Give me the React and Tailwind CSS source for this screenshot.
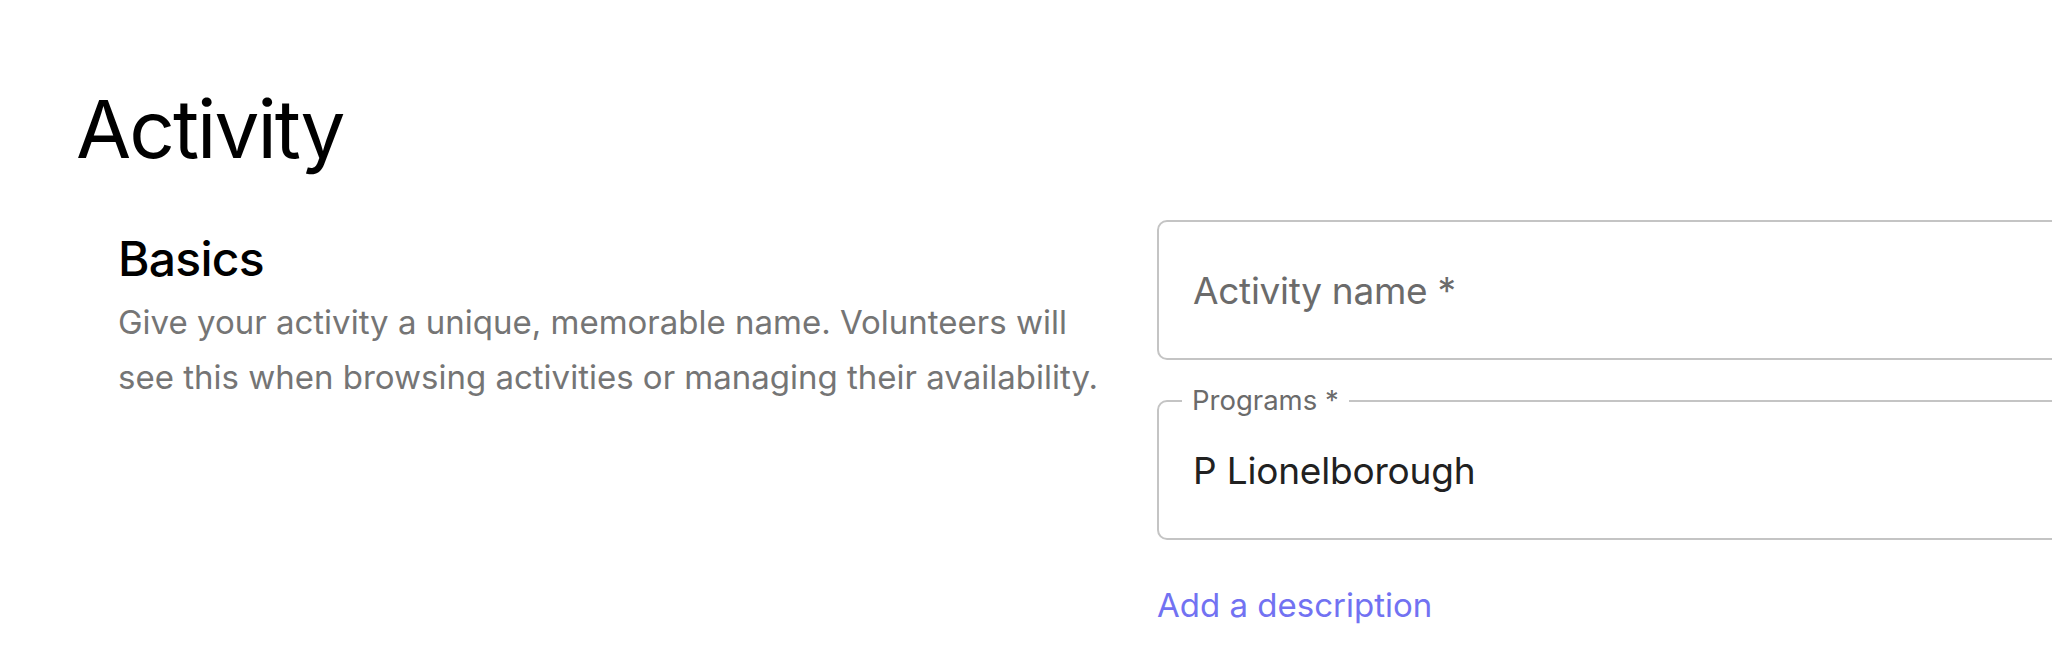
export default function App() {
  return (
    <div className="w-[2052px] h-[662px] overflow-hidden bg-white font-['Inter',sans-serif] text-black">
      <h1 className="pl-[76px] pt-[89px] text-[80px] leading-none font-normal tracking-[-0.025em]">
        Activity
      </h1>
      <div className="mt-[51px] flex">
        <div className="w-[1157px] shrink-0 pl-[118px] pt-[15px]">
          <h2 className="text-[48px] leading-none font-medium tracking-[-0.015em]">Basics</h2>
          <p className="mt-[12px] w-[1000px] text-[33px] leading-[55px] text-[#757575]">
            Give your activity a unique, memorable name. Volunteers will see this when browsing activities or managing their availability.
          </p>
        </div>
        <div className="flex w-[1100px] shrink-0 flex-col">
          <div className="flex h-[140px] items-center rounded-[10px] border-2 border-[#c4c4c4] pl-[34px]">
            <span className="text-[37px] leading-none text-[#6b6b6b] tracking-[-0.008em]">Activity name *</span>
          </div>
          <div className="relative mt-[40px] flex h-[140px] items-center rounded-[10px] border-2 border-[#c4c4c4] pl-[34px]">
            <span className="absolute left-[23px] top-[-1px] -translate-y-1/2 bg-white px-[10px] text-[27.5px] leading-none text-[#6b6b6b]">
              Programs *
            </span>
            <span className="text-[37px] leading-none text-[#212121] tracking-[-0.005em]">P Lionelborough</span>
          </div>
          <div className="mt-[49px] text-[33px] leading-none text-[#7272f2]">Add a description</div>
        </div>
      </div>
    </div>
  );
}
